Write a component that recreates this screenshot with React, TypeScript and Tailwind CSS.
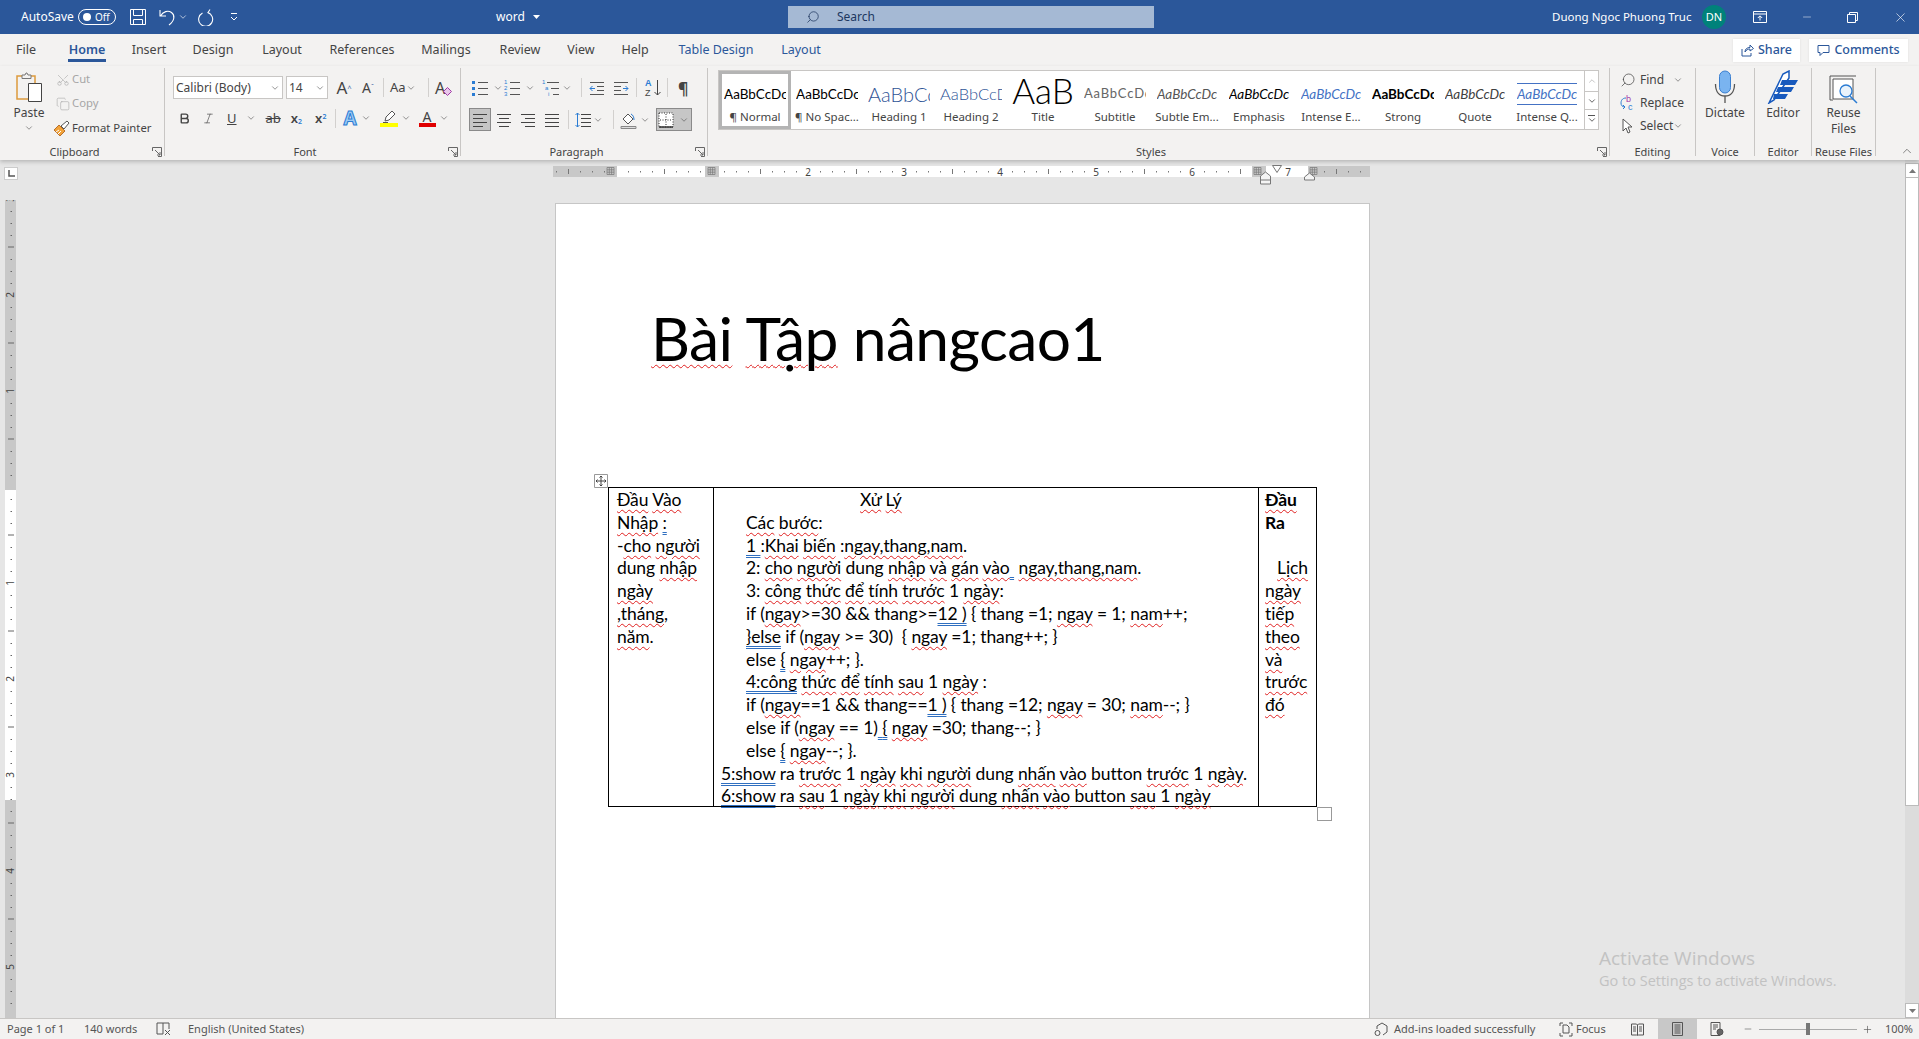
import React from "react";
import { ChevronDown, ChevronUp, Minus, Plus, X, Search, Scissors, Copy, Bold, Italic } from "lucide-react";

const W = ({ children }: { children: React.ReactNode }) => (
  <span className="underline decoration-wavy decoration-[#e02020] decoration-[1px] underline-offset-[3px]">{children}</span>
);
const D = ({ children }: { children: React.ReactNode }) => (
  <span className="underline decoration-double decoration-[#2f6fc0] decoration-[1px] underline-offset-[3px] whitespace-pre">{children}</span>
);

const Caret = ({ className = "" }: { className?: string }) => <ChevronDown size={10} strokeWidth={1.5} className={`shrink-0 text-[#555] ${className}`} />;

const Launcher = () => (
  <svg width="10" height="10" viewBox="0 0 10 10" className="absolute right-[2px] bottom-[-1px]" fill="none" stroke="#666">
    <path d="M.5 4V.5H9.5V9.5H6M3 3l5 5M8 5v3H5" />
  </svg>
);

const Divider = ({ className }: { className: string }) => <div className={`w-px h-[19px] shrink-0 bg-[#d2d0ce] ${className}`} />;

function Group({ label, className, launcher, children }: { label: string; className: string; launcher?: boolean; children: React.ReactNode }) {
  return (
    <div className={`relative shrink-0 h-[88px] mt-[2px] border-r border-[#c8c6c4] flex flex-col ${className}`}>
      <div className="flex-1 min-h-0">{children}</div>
      <div className={`h-[14px] mb-[-3px] text-center text-[11px] leading-[14px] text-[#444] ${launcher ? "pr-[15px]" : ""}`}>{label}</div>
      {launcher && <Launcher />}
    </div>
  );
}

const ListIcon = ({ kind }: { kind: number }) => (
  <svg width="18" height="20" viewBox="0 0 18 20" fill="none" className="shrink-0">
    {kind === 0 && <g fill="#2b7cd3"><rect x="1" y="3" width="3" height="3" /><rect x="1" y="9" width="3" height="3" /><rect x="1" y="15" width="3" height="3" /></g>}
    {kind === 1 && <g fill="#2b7cd3" fontSize="6" fontFamily="Liberation Sans"><text x="1" y="6">1</text><text x="1" y="12">2</text><text x="1" y="18">3</text></g>}
    {kind === 2 && <g fill="#2b7cd3" fontSize="6" fontFamily="Liberation Sans"><text x="0" y="6">1</text><text x="3" y="12">a</text><text x="6" y="18">i</text></g>}
    {kind === 2 ? <path d="M5 4.500h12M9 10.500h8M11 16.500h6" stroke="#555" /> : <path d="M7 4.5h10M7 10.5h10M7 16.5h10" stroke="#555" />}
  </svg>
);

const IndentIcon = ({ flip }: { flip?: boolean }) => (
  <svg width="16" height="16" viewBox="0 0 16 16" fill="none" className={flip ? "-scale-x-100" : ""}>
    <path d="M1 2.5h14M8 6.5h7M8 10.5h7M1 14.5h14" stroke="#555" />
    <path d="M1 8.5h5M3.5 6l-2.5 2.5L3.5 11" stroke="#2b7cd3" />
  </svg>
);

const AlignIcon = ({ lines }: { lines: string }) => (
  <svg width="16" height="16" viewBox="0 0 16 16" fill="none"><path d={lines} stroke="#444" /></svg>
);

function HRuler() {
  const ticks: React.ReactNode[] = [];
  for (let i = -5; i < 65; i++) {
    const x = 63 + i * 12;
    if (x < 2 || x > 815) continue;
    if (i % 8 === 0) {
      if (i > 8) ticks.push(<text key={i} x={x} y="9.500" textAnchor="middle" fontSize="10" fontFamily="Noto Sans" fill="#444">{i / 8}</text>);
    } else if (i % 4 === 0) {
      ticks.push(<path key={i} d={`M${x + 0.5} 3v5`} stroke="#777" />);
    } else {
      ticks.push(<rect key={i} x={x} y="5" width="1" height="1.500" fill="#777" />);
    }
  }
  const hash = (x: number) => <path d={`M${x} 1.500h7v7h-7zM${x} 3.800h7M${x} 6.200h7M${x + 2.300} 1.500v7M${x + 4.600} 1.500v7`} stroke="#777" strokeWidth=".7" fill="#c8c8c8" />;
  return (
    <svg width="817" height="20" viewBox="0 0 817 20" className="block overflow-visible">
      <rect width="817" height="11" fill="#c8c8c8" />
      <rect x="64" width="636" height="11" fill="#fff" />
      {ticks}
      <rect x="152" width="14" height="11" fill="#c8c8c8" />
      <rect x="699" width="14" height="11" fill="#c8c8c8" />
      <rect x="713" width="42" height="11" fill="#fff" />
      <text x="735" y="9.500" textAnchor="middle" fontSize="10" fontFamily="Noto Sans" fill="#444">7</text>
      <rect x="720" y="-3" width="12" height="11" fill="#fff" opacity="0" />
      {hash(54)}
      {hash(155)}
      {hash(701)}
      {hash(757)}
      <path d="M707.500 10l5-4 5 4v8h-10zM707.500 14h10" fill="#f4f4f4" stroke="#777" />
      <path d="M719.500 -.5h9l-4.500 7z" fill="#fff" stroke="#777" />
      <path d="M751.500 11l5-4 5 4v3h-10z" fill="#f4f4f4" stroke="#777" />
    </svg>
  );
}

function VRuler() {
  const ticks: React.ReactNode[] = [];
  for (let i = -24; i < 44; i++) {
    const y = 287 + i * 12;
    if (i % 8 === 0) {
      if (i !== 0) ticks.push(<text key={i} x="0" y="0" transform={`translate(9 ${y}) rotate(-90)`} textAnchor="middle" fontSize="10" fontFamily="Noto Sans" fill="#444">{Math.abs(i / 8)}</text>);
    } else if (i % 4 === 0) {
      ticks.push(<path key={i} d={`M3 ${y}h6`} stroke="#666" />);
    } else {
      ticks.push(<rect key={i} x="5.5" y={y} width="1.5" height="1" fill="#666" />);
    }
  }
  return (
    <svg width="11" height="819" viewBox="0 0 11 819" className="block">
      <rect width="11" height="819" fill="#c8c8c8" />
      <rect y="290" width="11" height="310" fill="#fff" />
      {ticks}
    </svg>
  );
}

const STYLES: { preview: string; label: string; cls: string }[] = [
  { preview: "AaBbCcDc", label: "¶ Normal", cls: "text-[13.5px] text-black" },
  { preview: "AaBbCcDc", label: "¶ No Spac...", cls: "text-[13.5px] text-black" },
  { preview: "AaBbCcDd", label: "Heading 1", cls: "text-[20px] text-[#2f5496] font-light" },
  { preview: "AaBbCcDd", label: "Heading 2", cls: "text-[16.5px] text-[#2f5496] font-light" },
  { preview: "AaB", label: "Title", cls: "text-[35px] leading-[32px] text-black font-light" },
  { preview: "AaBbCcDd", label: "Subtitle", cls: "text-[13px] tracking-[.8px] text-[#666]" },
  { preview: "AaBbCcDc", label: "Subtle Em...", cls: "text-[13.5px] italic text-[#555]" },
  { preview: "AaBbCcDc", label: "Emphasis", cls: "text-[13.5px] italic text-black" },
  { preview: "AaBbCcDc", label: "Intense E...", cls: "text-[13.5px] italic text-[#4472c4]" },
  { preview: "AaBbCcDc", label: "Strong", cls: "text-[13.5px] font-bold text-black" },
  { preview: "AaBbCcDc", label: "Quote", cls: "text-[13.5px] italic text-[#404040]" },
  { preview: "AaBbCcDc", label: "Intense Q...", cls: "text-[13.5px] italic text-[#4472c4] border-y border-[#4472c4]" },
];

const TABS = [
  { t: "File", w: "w-[52px]" },
  { t: "Home", w: "w-[70px]" },
  { t: "Insert", w: "w-[54px]" },
  { t: "Design", w: "w-[74px]" },
  { t: "Layout", w: "w-[64px]" },
  { t: "References", w: "w-[96px]" },
  { t: "Mailings", w: "w-[72px]" },
  { t: "Review", w: "w-[76px]" },
  { t: "View", w: "w-[46px]" },
  { t: "Help", w: "w-[62px]" },
  { t: "Table Design", w: "w-[100px]" },
  { t: "Layout", w: "w-[70px]" },
];

function TitleBar() {
  return (
    <div className="h-[34px] shrink-0 bg-[#2b579a] text-white flex items-center text-[12px]">
      <span className="ml-[21px] w-[57px]">AutoSave</span>
      <div className="w-[38px] h-[16px] rounded-full border border-white flex items-center pl-[4px] gap-[4px]">
        <span className="w-[8px] h-[8px] rounded-full bg-white" />
        <span className="text-[10px] leading-none">Off</span>
      </div>
      <svg width="18" height="18" viewBox="0 0 18 18" fill="none" stroke="#fff" className="ml-[13px]">
        <path d="M1.5 1.5h15v15h-15zM4.5 1.5v6h9v-6M4.5 16.5v-5h9v5" />
      </svg>
      <svg width="20" height="18" viewBox="0 0 20 18" fill="none" stroke="#fff" strokeWidth="1.1" className="ml-[11px]">
        <path d="M2 2v6h6M2.5 8C5 3.5 10 2 13.5 4.5c3.500 2.500 3.500 8-2.500 12.500" />
      </svg>
      <ChevronDown size={10} strokeWidth={1.5} className="text-white" />
      <svg width="18" height="18" viewBox="0 0 18 18" fill="none" stroke="#fff" strokeWidth="1.1" className="ml-[9px]">
        <path d="M13 1.500l-2 3 3 2M10.500 4.500a7 7 0 1 1-5 .5" />
      </svg>
      <svg width="10" height="10" viewBox="0 0 10 10" fill="none" stroke="#fff" className="ml-[14px]">
        <path d="M2 1.500h6M2 5l3 3 3-3" />
      </svg>
      <span className="ml-[257px] w-[37px]">word</span>
      <svg width="7" height="4" viewBox="0 0 7 4" fill="#fff"><path d="M0 0h7L3.500 4z" /></svg>
      <div className="ml-[248px] w-[366px] h-[22px] bg-[#a5b9d4] text-[#20375f] flex items-center">
        <Search size={14} strokeWidth={1.3} className="ml-[18px] -scale-x-100" />
        <span className="ml-[17px]">Search</span>
      </div>
      <span className="ml-[398px] w-[150px] text-[11.5px] whitespace-nowrap">Duong Ngoc Phuong Truc</span>
      <div className="w-[24px] h-[24px] rounded-full bg-[#00827a] flex items-center justify-center text-[11px]">DN</div>
      <svg width="14" height="12" viewBox="0 0 14 12" fill="none" stroke="#fff" className="ml-[27px]">
        <path d="M.5.500h13v11h-13zM.5 3h13M7 9.500V5M4.800 7L7 4.800 9.200 7" />
      </svg>
      <Minus size={12} strokeWidth={1} className="ml-[34px]" />
      <svg width="11" height="11" viewBox="0 0 11 11" fill="none" stroke="#fff" className="ml-[34px]">
        <path d="M.5 2.500h8v8h-8zM2.500 2.500v-2h8v8h-2" />
      </svg>
      <X size={15} strokeWidth={1} className="ml-[35px]" />
    </div>
  );
}

function TabRow() {
  return (
    <div className="h-[32px] shrink-0 flex items-center bg-[#f3f2f1] text-[12.5px] text-[#444] pr-[11px]">
      {TABS.map((tab, i) => (
        <div key={i} className={`${tab.w} h-full flex justify-center items-center relative ${i >= 10 ? "text-[#2b579a]" : ""} ${i === 1 ? "font-semibold text-[#2b579a]" : ""}`}>
          {tab.t}
          {i === 1 && <span className="absolute left-[16px] right-[16px] bottom-[4px] h-[3px] bg-[#2b579a]" />}
        </div>
      ))}
      <div className="ml-auto flex gap-[9px]">
        <div className="w-[67px] h-[23px] bg-white flex items-center justify-center gap-[4px] text-[#2b579a] font-medium shadow-[0_0_2px_#ddd]">
          <svg width="13" height="13" viewBox="0 0 13 13" fill="none" stroke="#2b579a"><path d="M1 5v7h9V9M4 8c0-3 2-4.500 5-4.500V1l3.500 3.500L9 7V5C7 5 5 6 4 8z" /></svg>
          Share
        </div>
        <div className="w-[99px] h-[23px] bg-white flex items-center justify-center gap-[4px] text-[#2b579a] font-medium shadow-[0_0_2px_#ddd]">
          <svg width="13" height="13" viewBox="0 0 13 13" fill="none" stroke="#2b579a"><path d="M1 1.500h11v7H6l-3 3v-3H1z" /></svg>
          Comments
        </div>
      </div>
    </div>
  );
}

function Ribbon() {
  return (
    <div className="h-[94px] shrink-0 bg-[#f3f2f1] flex text-[#444] text-[12px] shadow-[0_2px_4px_rgba(0,0,0,0.2)] relative z-10">
      <Group label="Clipboard" className="w-[165px]" launcher>
        <div className="flex">
          <div className="w-[58px] flex flex-col items-center pt-[4px]">
            <svg width="28" height="30" viewBox="0 0 28 30" fill="none">
              <path d="M7 4H2v23h11" stroke="#dd9a3c" strokeWidth="1.500" />
              <path d="M15 4h5v7" stroke="#dd9a3c" strokeWidth="1.500" />
              <path d="M7 6.500V3h3l1-2h1l1 2h3v3.500z" fill="#f3f2f1" stroke="#777" />
              <path d="M13.500 11.500h13v18h-13z" fill="#fff" stroke="#444" />
            </svg>
            <span className="mt-[2px] leading-[18px]">Paste</span>
            <Caret className="mt-[1px]" />
          </div>
          <div className="flex flex-col text-[11.3px]">
            <div className="h-[23px] flex items-center text-[#a6a6a6]"><Scissors size={14} strokeWidth={1} className="-rotate-90 -ml-[2px] mr-[2px]" />Cut</div>
            <div className="h-[25px] flex items-center text-[#a6a6a6]"><Copy size={14} strokeWidth={1} className="-ml-[2px] mr-[2px]" />Copy</div>
            <div className="h-[24px] flex items-center gap-[2px] -ml-[5px] whitespace-nowrap">
              <svg width="17" height="17" viewBox="0 0 17 17" fill="none">
                <path d="M1 10l5-5 6 6-5 5z" fill="#f2a33a" stroke="#b8702a" />
                <path d="M3 12l3-2M5 14l3-3" stroke="#fff" />
                <path d="M8 6l6-5 2 2-5 6z" fill="#fff" stroke="#555" />
              </svg>
              Format Painter
            </div>
          </div>
        </div>
      </Group>

      <Group label="Font" className="w-[296px]" launcher>
        <div className="flex items-center pl-[8px] pt-[8px]">
          <div className="w-[110px] h-[23px] bg-white border border-[#c8c6c4] flex items-center pl-[2px] justify-between pr-[2px] text-[12px] whitespace-nowrap">Calibri (Body)<Caret /></div>
          <div className="ml-[3px] w-[42px] h-[23px] bg-white border border-[#c8c6c4] flex items-center pl-[2px] justify-between pr-[2px]">14<Caret /></div>
          <div className="w-[24px] ml-[4px] text-[17px] text-center leading-none">A<sup className="text-[7px] text-[#2b579a]">^</sup></div>
          <div className="w-[22px] ml-[1px] text-[14px] text-center leading-none">A<sup className="text-[7px] text-[#2b579a]">ˇ</sup></div>
          <Divider className="ml-[4px]" />
          <div className="ml-[6px] w-[30px] flex items-center text-[13px]">Aa<Caret /></div>
          <Divider className="ml-[8px]" />
          <div className="ml-[6px] w-[20px] text-[16px] leading-none flex items-end">A<svg width="9" height="9" viewBox="0 0 9 9" className="-ml-[2px]"><path d="M4.500 .5L8.500 4.500 4.500 8.500 .5 4.500z" fill="#e8c8ea" stroke="#a33aa8" /></svg></div>
        </div>
        <div className="flex items-center pl-[8px] mt-[8px] h-[22px]">
          <Bold size={13} strokeWidth={2.6} className="ml-[5px] shrink-0" />
          <Italic size={13} strokeWidth={1.2} className="ml-[11px] shrink-0" />
          <span className="ml-[12px] underline text-[13px] leading-none">U</span>
          <Caret className="ml-[9px]" />
          <span className="ml-[10px] line-through text-[13px] leading-none">ab</span>
          <span className="ml-[10px] text-[13px] font-semibold leading-none">x<sub className="text-[7px] text-[#2b7cd3]">2</sub></span>
          <span className="ml-[13px] text-[13px] font-semibold leading-none">x<sup className="text-[7px] text-[#2b7cd3]">2</sup></span>
          <Divider className="ml-[9px]" />
          <span className="ml-[7px] text-[19px] font-bold leading-none text-[#9ccbf5] [-webkit-text-stroke:1px_#2b7cd3]">A</span>
          <Caret className="ml-[4px]" />
          <div className="ml-[9px] flex flex-col items-center w-[18px] shrink-0">
            <svg width="14" height="13" viewBox="0 0 14 13" fill="none"><path d="M3 11l1-4 6-6 3 3-6 6z" fill="#fff" stroke="#555" /><path d="M1 12.500h5" stroke="#555" /></svg>
            <span className="w-[18px] h-[4px] bg-[#ffff00]" />
          </div>
          <Caret className="ml-[3px]" />
          <div className="ml-[8px] flex flex-col items-center w-[17px] shrink-0">
            <span className="text-[14px] leading-[13px]">A</span>
            <span className="w-[17px] h-[4px] bg-[#e00000]" />
          </div>
          <Caret className="ml-[3px]" />
        </div>
      </Group>

      <Group label="Paragraph" className="w-[247px]" launcher>
        <div className="flex items-center pl-[10px] pt-[8px] h-[31px]">
          <ListIcon kind={0} /><Caret className="ml-[4px]" />
          <ListIcon kind={1} /><Caret className="ml-[4px]" />
          <div className="ml-[7px] flex items-center"><ListIcon kind={2} /><Caret className="ml-[2px]" /></div>
          <Divider className="ml-[9px]" />
          <div className="ml-[7px]"><IndentIcon /></div>
          <div className="ml-[8px]"><IndentIcon flip /></div>
          <Divider className="ml-[7px]" />
          <svg width="19" height="19" viewBox="0 0 19 19" fill="none" className="ml-[7px] shrink-0">
            <text x="1" y="8" fontSize="9" fontWeight="700" fill="#2b7cd3" fontFamily="Liberation Sans">A</text>
            <text x="1" y="18" fontSize="9" fill="#444" fontFamily="Liberation Sans">Z</text>
            <path d="M13.500 2v15M10.500 14l3 3 3-3" stroke="#444" />
          </svg>
          <Divider className="ml-[4px]" />
          <span className="ml-[10px] text-[16px] font-bold leading-none">¶</span>
        </div>
        <div className="flex items-center pl-[8px] mt-[9px] h-[23px]">
          <div className="w-[22px] h-[23px] shrink-0 bg-[#c6c6c6] border border-[#8a8a8a] flex items-center justify-center"><AlignIcon lines="M1 2.500h14M1 6.500h10M1 10.500h14M1 14.500h10" /></div>
          <div className="w-[24px] ml-[1px] flex justify-center"><AlignIcon lines="M1 2.500h14M3 6.500h10M1 10.500h14M3 14.500h10" /></div>
          <div className="w-[24px] flex justify-center"><AlignIcon lines="M1 2.500h14M5 6.500h10M1 10.500h14M5 14.500h10" /></div>
          <div className="w-[24px] flex justify-center"><AlignIcon lines="M1 2.500h14M1 6.500h14M1 10.500h14M1 14.500h14" /></div>
          <Divider className="ml-[4px]" />
          <svg width="16" height="18" viewBox="0 0 16 18" fill="none" className="ml-[6px] shrink-0">
            <path d="M2.500 2v14M.5 4l2-2 2 2M.5 14l2 2 2-2" stroke="#2b7cd3" /><path d="M6 3.500h10M6 7.500h10M6 11.500h10M6 15.500h10" stroke="#444" />
          </svg>
          <Caret className="ml-[2px]" />
          <Divider className="ml-[10px]" />
          <svg width="17" height="18" viewBox="0 0 17 18" fill="none" className="ml-[6px] shrink-0">
            <path d="M3 8l5-5 5 5-5 5z" fill="#fff" stroke="#555" /><path d="M11 3c2 1 3 3 3 6" stroke="#2b7cd3" /><path d="M1 15.500h15v2H1z" fill="#ddd" stroke="#888" />
          </svg>
          <Caret className="ml-[3px]" />
          <div className="ml-[6px] w-[36px] h-[23px] shrink-0 bg-[#c6c6c6] border border-[#8a8a8a] flex items-center pl-[1px] gap-[5px]">
            <svg width="16" height="16" viewBox="0 0 16 16" fill="#fff" stroke="#333">
              <path d="M1 1h14v14H1z" strokeDasharray="1 1.500" /><path d="M8 2v12M2 8h12" strokeDasharray="1 1.500" /><path d="M1 15h14" strokeWidth="1.500" />
            </svg>
            <Caret />
          </div>
        </div>
      </Group>

      <Group label="Styles" className="w-[902px]" launcher>
        <div className="ml-[10px] mt-[2px] w-[881px] h-[60px] bg-white border border-[#c8c6c4] flex">
          {STYLES.map((s, i) => (
            <div key={i} className={`w-[72px] shrink-0 h-full flex flex-col items-center overflow-hidden ${i === 0 ? "border-[3px] border-[#b4b4b4] pt-[8px]" : "pt-[11px]"}`}>
              <div className={`max-w-[62px] flex overflow-hidden whitespace-nowrap font-['Lato',sans-serif] ${i === 4 ? "h-[28px] -mt-[4px] items-end" : "h-[24px] items-center"}`}>
                <span className={s.cls}>{s.preview}</span>
              </div>
              <div className="text-[11.5px] text-[#444] whitespace-nowrap mt-[2px]">{s.label}</div>
            </div>
          ))}
          <div className="ml-auto w-[14px] border-l border-[#c8c6c4] flex flex-col">
            <div className="h-[20px] flex items-center justify-center text-[#bbb]"><ChevronUp size={10} /></div>
            <div className="h-[19px] flex items-center justify-center border-y border-[#c8c6c4]"><ChevronDown size={10} /></div>
            <div className="h-[19px] flex flex-col items-center justify-center"><span className="w-[7px] h-px bg-[#555] mb-[1px]" /><ChevronDown size={10} className="-mt-[2px]" /></div>
          </div>
        </div>
      </Group>

      <Group label="Editing" className="w-[86px]">
        <div className="pl-[10px] flex flex-col text-[12px]">
          <div className="h-[23px] flex items-center"><span className="w-[20px]"><Search size={16} strokeWidth={1.1} className="-scale-x-100" /></span>Find<Caret className="ml-[9px]" /></div>
          <div className="h-[23px] flex items-center">
            <svg width="20" height="17" viewBox="0 0 20 17" fill="none"><text x="6" y="8" fontSize="9" fill="#a33aa8" fontFamily="Liberation Sans">b</text><text x="8" y="16" fontSize="9" fill="#2b7cd3" fontFamily="Liberation Sans">c</text><path d="M6 4C2 4 1 7 1 9c0 2 1 4 4 4M3 11l2 2-2 2" stroke="#2b7cd3" /></svg>
            Replace
          </div>
          <div className="h-[23px] flex items-center">
            <span className="w-[20px] pl-[2px]"><svg width="13" height="16" viewBox="0 0 13 16" fill="#fff" stroke="#555"><path d="M1 1v12l3-3 2 5 2-1-2-5h4z" /></svg></span>
            Select<Caret />
          </div>
        </div>
      </Group>

      <Group label="Voice" className="w-[59px]">
        <div className="flex flex-col items-center pt-[2px]">
          <svg width="22" height="34" viewBox="0 0 22 34" fill="none">
            <rect x="5.500" y="1" width="11" height="22" rx="5.500" fill="#7ab4f0" stroke="#3a7fd0" />
            <path d="M1.500 14c0 8 4 12 9.500 12s9.500-4 9.500-12M11 26v7" stroke="#555" strokeWidth="1.300" />
          </svg>
          <span className="leading-[18px]">Dictate</span>
        </div>
      </Group>

      <Group label="Editor" className="w-[57px]">
        <div className="flex flex-col items-center pt-[2px]">
          <svg width="32" height="34" viewBox="0 0 32 34" fill="none">
            <path d="M2 33L16 4l6-3 0 7L7 30z" fill="#fff" stroke="#185abd" strokeWidth="1.500" />
            <path d="M15 10h16l-3 5H13zM11 17h16l-3 5H9zM7 24h14l-3 5H6z" fill="#185abd" />
          </svg>
          <span className="leading-[18px]">Editor</span>
        </div>
      </Group>

      <Group label="Reuse Files" className="w-[64px]">
        <div className="flex flex-col items-center pt-[2px] leading-[16px]">
          <svg width="32" height="34" viewBox="0 0 32 34" fill="none">
            <path d="M2 6h26M2 6v24h3" stroke="#555" /><path d="M5 9h20v20H5z" fill="#fff" stroke="#555" />
            <circle cx="18" cy="21" r="6" fill="#eaf3fb" stroke="#2b7cd3" strokeWidth="1.300" /><path d="M22 26l7 7" stroke="#2b7cd3" strokeWidth="1.500" />
          </svg>
          <span className="mt-[1px]">Reuse</span>
          <span>Files</span>
        </div>
      </Group>
      <ChevronUp size={14} strokeWidth={1.2} className="absolute right-[5px] bottom-[2px] text-[#555]" />
    </div>
  );
}

function WordTable() {
  const line = "whitespace-pre h-[22.8px]";
  return (
    <div className="relative ml-[52px] w-[709px] h-[320px] border border-black flex font-['Lato','Noto_Sans',sans-serif] text-[17.5px] leading-[22.8px] tracking-[-0.1px] text-black">
      <svg width="14" height="14" viewBox="0 0 14 14" fill="none" className="absolute -left-[15px] -top-[14px]">
        <path d="M.5.500h13v13H.5z" fill="#fff" stroke="#999" />
        <path d="M7 2v10M2 7h10M5.500 3.500L7 2l1.500 1.500M5.500 10.500L7 12l1.500-1.500M3.500 5.500L2 7l1.500 1.500M10.500 5.500L12 7l-1.500 1.500" stroke="#444" />
      </svg>
      <div className="absolute -right-[16px] -bottom-[15px] w-[15px] h-[14px] border border-[#999] bg-white" />
      <div className="w-[105px] shrink-0 border-r border-black pl-[8px] pt-[1px]">
        <div className={line}><W>Đầu</W> <W>Vào</W></div>
        <div className={line}><W>Nhập</W> <D>:</D></div>
        <div className={line}>-<W>cho</W> <W>người</W></div>
        <div className={line}>dung <W>nhập</W></div>
        <div className={line}><W>ngày</W></div>
        <div className={line}><W>,tháng</W>,</div>
        <div className={line}><W>năm</W>.</div>
      </div>
      <div className="w-[545px] shrink-0 border-r border-black pl-[7px] pt-[1px]">
        <div className={`${line} pl-[139px]`}><W>Xử</W> <W>Lý</W></div>
        <div className={`${line} pl-[25px]`}><W>Các</W> <W>bước</W>:</div>
        <div className={`${line} pl-[25px]`}><D>1 </D>:<W>Khai</W> <W>biến</W> :<W>ngay,thang,nam</W>.</div>
        <div className={`${line} pl-[25px]`}>2: <W>cho</W> <W>người</W> dung <W>nhập</W> <W>và</W> <W>gán</W> <W>vào</W><D> </D> <W>ngay,thang,nam</W>.</div>
        <div className={`${line} pl-[25px]`}>3: <W>công</W> <W>thức</W> <W>để</W> <W>tính</W> <W>trước</W> 1 <W>ngày</W>:</div>
        <div className={`${line} pl-[25px]`}>if (<W>ngay</W>&gt;=30 &amp;&amp; thang&gt;=<D>12 )</D> {"{"} thang =1; <W>ngay</W> = 1; <W>nam</W>++;</div>
        <div className={`${line} pl-[25px]`}><D>{"}else"}</D> if (<W>ngay</W> &gt;= 30)  {"{"} <W>ngay</W> =1; thang++; {"}"}</div>
        <div className={`${line} pl-[25px]`}>else <D>{"{"}</D> <W>ngay</W>++; {"}"}.</div>
        <div className={`${line} pl-[25px]`}><D>4:công</D> <W>thức</W> <W>để</W> <W>tính</W> <W>sau</W> 1 <W>ngày</W> :</div>
        <div className={`${line} pl-[25px]`}>if (<W>ngay</W>==1 &amp;&amp; thang==<D>1 )</D> {"{"} thang =12; <W>ngay</W> = 30; <W>nam</W>--; {"}"}</div>
        <div className={`${line} pl-[25px]`}>else if (<W>ngay</W> == 1)<D> {"{"}</D> <W>ngay</W> =30; thang--; {"}"}</div>
        <div className={`${line} pl-[25px]`}>else <D>{"{"}</D> <W>ngay</W>--; {"}"}.</div>
        <div className={line}><D>5:show</D> ra <W>trước</W> 1 <W>ngày</W> <W>khi</W> <W>người</W> dung <W>nhấn</W> <W>vào</W> button <W>trước</W> 1 <W>ngày</W>.</div>
        <div className={line}><D>6:show</D> ra <W>sau</W> 1 <W>ngày</W> <W>khi</W> <W>người</W> dung <W>nhấn</W> <W>vào</W> button <W>sau</W> 1 <W>ngày</W></div>
      </div>
      <div className="flex-1 pl-[6px] pt-[1px]">
        <div className={`${line} font-bold`}><W>Đầu</W></div>
        <div className={`${line} font-bold`}>Ra</div>
        <div className={line} />
        <div className={`${line} pl-[12px]`}><W>Lịch</W></div>
        <div className={line}><W>ngày</W></div>
        <div className={line}><W>tiếp</W></div>
        <div className={line}><W>theo</W></div>
        <div className={line}><W>và</W></div>
        <div className={line}><W>trước</W></div>
        <div className={line}><W>đó</W></div>
      </div>
    </div>
  );
}

function DocArea() {
  return (
    <div className="relative flex-1 min-h-0 flex bg-[#e6e6e6] overflow-hidden">
      <div className="w-[553px] shrink-0 pl-[5px] pt-[7px]">
        <div className="w-[14px] h-[13px] -ml-[1px] bg-white border border-[#ccc] flex items-center justify-center">
          <svg width="7" height="7" viewBox="0 0 7 7" fill="none" stroke="#555" strokeWidth="1.500"><path d="M1 0v6h6" /></svg>
        </div>
        <div className="mt-[20px]"><VRuler /></div>
      </div>
      <div className="w-[817px] shrink-0 pt-[6px]">
        <HRuler />
        <div className="ml-[2px] mt-[17px] w-[815px] h-[1100px] bg-white border border-[#c6c6c6]">
          <div className="h-[283px] pl-[95px] pt-[99px] font-['Lato','Noto_Sans',sans-serif] text-[60.5px] leading-[70px] tracking-[-0.6px] text-black whitespace-pre">
            <W>Bài</W> <W>Tập</W> nângcao1
          </div>
          <WordTable />
        </div>
      </div>
      <div className="flex-1" />
      <div className="w-[14px] shrink-0 bg-[#dcdcdc] flex flex-col pt-[3px]">
        <div className="h-[15px] bg-white border border-[#bbb] flex items-center justify-center"><svg width="7" height="4" viewBox="0 0 7 4" fill="#777"><path d="M0 4h7L3.500 0z" /></svg></div>
        <div className="h-[628px] bg-white border-x border-b border-[#bbb]" />
        <div className="flex-1" />
        <div className="h-[15px] bg-white border border-[#bbb] flex items-center justify-center"><svg width="7" height="4" viewBox="0 0 7 4" fill="#777"><path d="M0 0h7L3.500 4z" /></svg></div>
      </div>
      <div className="absolute left-[1599px] top-[785px] font-['Open_Sans',sans-serif] text-[#c2c2c2]">
        <div className="text-[19px] leading-[26px]">Activate Windows</div>
        <div className="text-[14.5px] leading-[19px] whitespace-nowrap">Go to Settings to activate Windows.</div>
      </div>
    </div>
  );
}

function StatusBar() {
  return (
    <div className="h-[21px] shrink-0 bg-[#f3f2f1] border-t border-[#c8c6c4] flex items-center text-[11px] text-[#555]">
      <span className="ml-[7px] w-[77px]">Page 1 of 1</span>
      <span className="w-[72px]">140 words</span>
      <svg width="15" height="14" viewBox="0 0 15 14" fill="none" stroke="#555"><path d="M7 1H1v11h6M7 1h6v6M7 1v11M9 8l5 5M14 8l-5 5" /></svg>
      <span className="ml-[17px]">English (United States)</span>
      <svg width="17" height="16" viewBox="0 0 17 16" fill="none" stroke="#555" className="ml-auto"><path d="M3 8V5l5-3 5 3v6l-4 3" /><circle cx="3.500" cy="12" r="2.500" /></svg>
      <span className="ml-[3px] w-[165px] whitespace-nowrap">Add-ins loaded successfully</span>
      <svg width="14" height="15" viewBox="0 0 14 15" fill="none" stroke="#555"><path d="M1 4V1h3M10 1h3v3M1 11v3h3M10 14h3v-3M4 3h4l2 2v6H4z" /></svg>
      <span className="ml-[3px] w-[55px]">Focus</span>
      <svg width="13" height="13" viewBox="0 0 13 13" fill="none" stroke="#555"><path d="M.5 1h5l1 1 1-1h5v11h-5l-1 .5-1-.5h-5zM6.500 2v10M2 4h3M2 6h3M2 8h3M8 4h3M8 6h3M8 8h3" /></svg>
      <div className="ml-[14px] w-[39px] h-[20px] bg-[#c8c8c8] flex items-center justify-center">
        <svg width="11" height="14" viewBox="0 0 11 14" fill="none" stroke="#555"><path d="M.5.500h10v13H.5zM2.500 3h6M2.500 5h6M2.500 7h6M2.500 9h6M2.500 11h6" /></svg>
      </div>
      <svg width="14" height="14" viewBox="0 0 14 14" fill="none" stroke="#555" className="ml-[13px]"><path d="M1 .5h9v13H1zM3 3h5M3 5h5M3 7h3" /><circle cx="10" cy="10" r="3" fill="#666" /></svg>
      <Minus size={10} strokeWidth={1.4} className="ml-[19px]" />
      <div className="ml-[6px] w-[98px] h-px bg-[#aaa] relative">
        <span className="absolute left-[47px] -top-[6px] w-[4px] h-[12px] bg-[#777]" />
      </div>
      <Plus size={11} strokeWidth={1.4} className="ml-[5px]" />
      <span className="ml-[12px] mr-[6px]">100%</span>
    </div>
  );
}

export default function App() {
  return (
    <div className="w-[1919px] h-[1039px] flex flex-col overflow-hidden font-['Noto_Sans',sans-serif]">
      <TitleBar />
      <TabRow />
      <Ribbon />
      <DocArea />
      <StatusBar />
    </div>
  );
}
